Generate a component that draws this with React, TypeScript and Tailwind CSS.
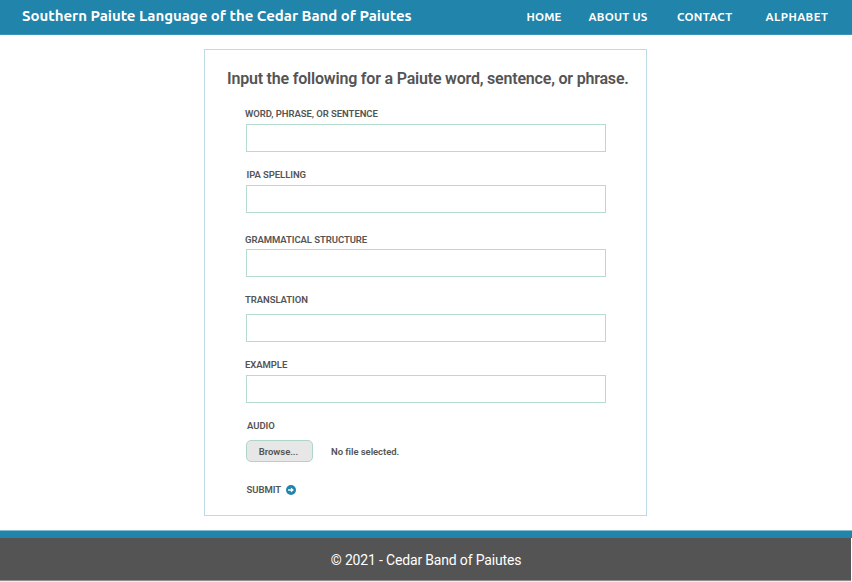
const navItems = [
  { label: "HOME", className: "w-[36px] mr-[26px] tracking-[0.15px]" },
  { label: "ABOUT US", className: "w-[60px] mr-[28.5px] tracking-[0.25px]" },
  { label: "CONTACT", className: "w-[56px] mr-[32.5px] tracking-[0.35px]" },
  { label: "ALPHABET", className: "w-[63px] tracking-[0.4px]" },
];

const fields = [
  { label: "WORD, PHRASE, OR SENTENCE", labelClass: "mt-[17px]", inputClass: "mt-1" },
  { label: "IPA SPELLING", labelClass: "mt-[17px] pl-[1.5px]", inputClass: "mt-1" },
  { label: "GRAMMATICAL STRUCTURE", labelClass: "mt-[21px]", inputClass: "mt-[3px]" },
  { label: "TRANSLATION", labelClass: "mt-[17px]", inputClass: "mt-2" },
  { label: "EXAMPLE", labelClass: "mt-[17px]", inputClass: "mt-1" },
];

function ArrowIcon() {
  return (
    <svg viewBox="0 0 10 10" className="h-[10px] w-[10px]" aria-hidden="true">
      <circle cx="5" cy="5" r="5" fill="#2184ab" />
      <path d="M2.1 4.3h2.8V2.6L7.9 5 4.9 7.4V5.7H2.1z" fill="#fff" />
    </svg>
  );
}

export default function App() {
  return (
    <div className="flex h-[582px] w-[852px] flex-col overflow-hidden bg-white font-['Roboto',sans-serif] text-[#545454]">
      <header className="flex h-[35px] shrink-0 items-center border-b border-[#3d93b6] bg-[#2184ab] pl-[22px] font-['Ubuntu','Noto_Sans',sans-serif] whitespace-nowrap text-white">
        <h1 className="w-[504.5px] pb-[2px] text-[15px] leading-[20px] font-semibold tracking-[-0.03px]">
          Southern Paiute Language of the Cedar Band of Paiutes
        </h1>
        <nav className="flex text-[11.5px] leading-[20px] font-semibold">
          {navItems.map((item) => (
            <a key={item.label} href="#" className={item.className}>
              {item.label}
            </a>
          ))}
        </nav>
      </header>

      <main className="ml-[204px] mt-[14px] h-[467px] w-[443px] shrink-0 border border-[#bddae5] pt-[17px]">
        <h2 className="pl-[22px] text-[16px] leading-[24px] font-semibold tracking-[-0.2px] whitespace-nowrap">
          Input the following for a Paiute word, sentence, or phrase.
        </h2>
        <form className="pl-[40px] text-[9.5px] leading-[12px] font-semibold tracking-[-0.06px]">
          {fields.map((field) => (
            <label key={field.label} className="block">
              <span className={`block ${field.labelClass}`}>{field.label}</span>
              <input
                type="text"
                className={`ml-[1px] block h-[28px] w-[360px] border border-[#b5dccf] bg-white outline-none ${field.inputClass}`}
              />
            </label>
          ))}
          <div className="mt-[17px] pl-[2px]">AUDIO</div>
          <div className="mt-2 flex items-center pl-[1px]">
            <button
              type="button"
              className="h-[22px] w-[67px] rounded-[5px] border border-[#aed5c8] bg-[#e7e7e7] pt-[2px] pr-[2px]"
            >
              Browse...
            </button>
            <span className="ml-[18px] pt-[2px]">No file selected.</span>
          </div>
          <button type="submit" className="mt-[22px] flex h-[12px] items-center gap-[5px] pl-[1.5px]">
            SUBMIT
            <ArrowIcon />
          </button>
        </form>
      </main>

      <footer className="mt-[14px] flex h-[52px] shrink-0 flex-col">
        <div className="h-2 border-t border-[#8abcd0] bg-[#2184ab]" />
        <div className="mr-[1px] flex h-[43px] items-center justify-center border-b border-[#8f8d8d] bg-[#545454] pt-[2px] pr-[3px] text-[14px] leading-[20px] tracking-[-0.17px] text-white">
          <span className="pl-1">© 2021 - Cedar Band of Paiutes</span>
        </div>
        <div className="h-px bg-[#eeeded]" />
      </footer>
    </div>
  );
}
